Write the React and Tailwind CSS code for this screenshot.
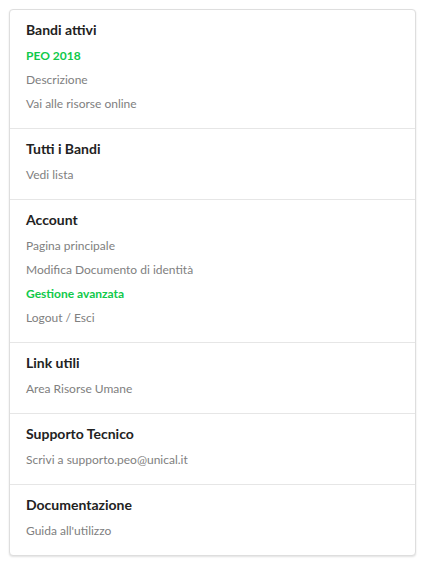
export default function App() {
  const sections = [
    { title: "Bandi attivi", items: [{ t: "PEO 2018", g: true }, { t: "Descrizione" }, { t: "Vai alle risorse online" }] },
    { title: "Tutti i Bandi", items: [{ t: "Vedi lista" }] },
    {
      title: "Account",
      items: [
        { t: "Pagina principale" },
        { t: "Modifica Documento di identità" },
        { t: "Gestione avanzata", g: true },
        { t: "Logout / Esci" },
      ],
    },
    { title: "Link utili", items: [{ t: "Area Risorse Umane" }] },
    { title: "Supporto Tecnico", items: [{ t: "Scrivi a supporto.peo@unical.it" }] },
    { title: "Documentazione", items: [{ t: "Guida all'utilizzo" }] },
  ];
  return (
    <div className="min-h-[572px] bg-white pt-[9px] pl-[9px]" style={{ fontFamily: "Lato, 'Noto Sans', sans-serif" }}>
      <div className="w-[407px] rounded-[4px] border border-[#dedede] bg-white shadow-[0_1px_2px_rgba(0,0,0,0.12)]">
        {sections.map((s, i) => (
          <div key={i} className={"pl-4 pt-[7px] pb-[12px] " + (i > 0 ? "border-t border-[#e6e6e6]" : "")}>
            <div className="h-6 flex items-center text-[14px] font-bold text-[#222]">{s.title}</div>
            <div className="mt-[3px]">
              {s.items.map((it, j) => (
                <div
                  key={j}
                  className={
                    "h-6 flex items-center text-[12px] " +
                    (it.g ? "font-bold text-[#10c94a]" : "text-[#808080]")
                  }
                >
                  {it.t}
                </div>
              ))}
            </div>
          </div>
        ))}
      </div>
    </div>
  );
}
